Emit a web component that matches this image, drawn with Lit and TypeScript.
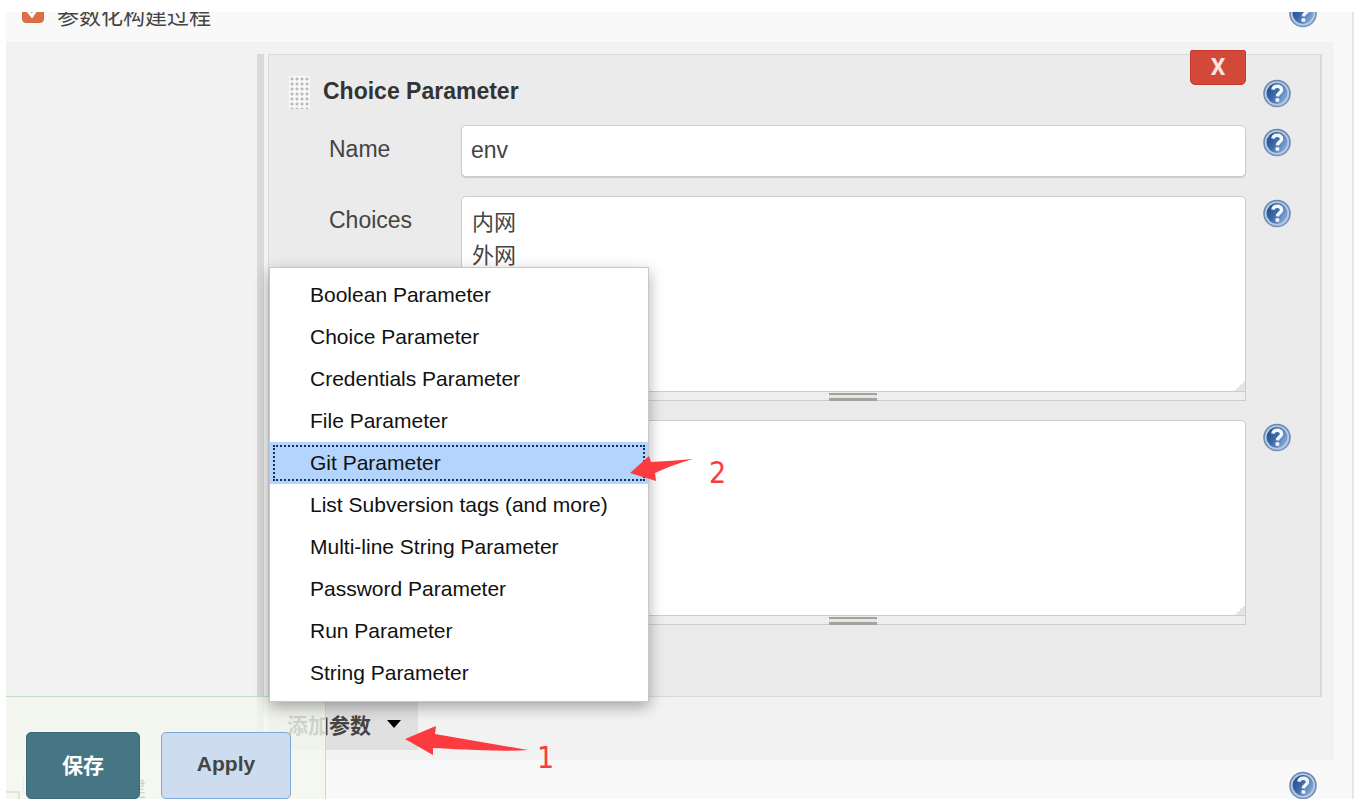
import { LitElement, html, css } from "lit";
import { customElement, property, state } from "lit/decorators.js";
import { classMap } from "lit/directives/class-map.js";

@customElement("help-button")
export class HelpButton extends LitElement {
  @property() topic = "";

  static styles = css`
    :host {
      display: block;
      width: 28px;
      height: 29px;
      flex: none;
    }
    .help {
      display: block;
      width: 28px;
      height: 29px;
      padding: 0;
      border: 0;
      background: none;
      cursor: pointer;
    }
    .icon {
      display: block;
    }
  `;

  render() {
    return html`<button class="help" type="button" aria-label="Help: ${this.topic}">
      <svg class="icon" width="28" height="29" viewBox="0 0 28 29" aria-hidden="true">
        <defs>
          <linearGradient id="disc" x1="0" y1="0.2" x2="1" y2="0.8">
            <stop offset="0" stop-color="#234c8c" />
            <stop offset="0.45" stop-color="#3f6cab" />
            <stop offset="1" stop-color="#8fb4dc" />
          </linearGradient>
          <linearGradient id="rim" x1="0" y1="0" x2="0" y2="1">
            <stop offset="0" stop-color="#6a85ad" />
            <stop offset="1" stop-color="#7691b8" />
          </linearGradient>
        </defs>
        <circle cx="14" cy="14.5" r="13.8" fill="url(#rim)" />
        <circle cx="14" cy="14.5" r="12.2" fill="#b4c9e4" />
        <circle cx="14" cy="14.5" r="10.4" fill="url(#disc)" />
        <path
          d="M9.8 10.6C10.2 8.2 11.9 7.2 14.2 7.2C17 7.2 18.6 8.8 18.6 11C18.6 14 14.6 13.9 14.4 17.4"
          fill="none"
          stroke="#f2f6fc"
          stroke-width="3.4"
        />
        <rect x="12.5" y="19.2" width="3.8" height="3.6" rx="0.8" fill="#f2f6fc" />
      </svg>
    </button>`;
  }
}

@customElement("app-root")
export class AppRoot extends LitElement {
  @state() private selected = "Git Parameter";

  private readonly types = [
    "Boolean Parameter",
    "Choice Parameter",
    "Credentials Parameter",
    "File Parameter",
    "Git Parameter",
    "List Subversion tags (and more)",
    "Multi-line String Parameter",
    "Password Parameter",
    "Run Parameter",
    "String Parameter",
  ];

  static styles = css`
    :host {
      display: block;
      box-sizing: border-box;
      padding: 12px 8px 9px 6px;
      background: #fff;
      color: #444;
      font-family: "Liberation Sans", "Noto Sans CJK SC", sans-serif;
      font-size: 23px;
    }
    * {
      box-sizing: border-box;
    }
    button,
    input,
    textarea {
      font-family: inherit;
    }
    .panel {
      position: relative;
      overflow: hidden;
      background: #f9f9f9;
      border-right: 2px solid #e6e6e6;
    }
    .option {
      display: flex;
      align-items: flex-start;
      padding: 0 35px 0 16px;
    }
    .option.first {
      height: 43px;
      margin-top: -13px;
    }
    .option.next {
      height: 39px;
      padding: 11px 35px 0 0;
      overflow: hidden;
    }
    .option-label {
      display: flex;
      align-items: flex-start;
      flex: 1;
      gap: 13px;
      font-size: 22px;
      line-height: 35px;
    }
    .tick {
      appearance: none;
      width: 22px;
      height: 22px;
      margin: 2px 0 0;
      border: 1px solid #c9c9c9;
      border-radius: 4px;
      background: #fff;
    }
    .tick:checked {
      border-color: #d0693f;
      background: #dc6f45
        url("data:image/svg+xml,%3Csvg xmlns='http://www.w3.org/2000/svg' viewBox='0 0 20 20'%3E%3Cpath d='M5 9l4 5 6-9' fill='none' stroke='white' stroke-width='3'/%3E%3C/svg%3E");
    }
    .edge {
      width: 14px;
      height: 8px;
      align-self: flex-end;
      margin-right: 3px;
      border: solid #999;
      border-width: 2px 2px 0 0;
    }
    .section {
      margin-right: 18px;
      padding: 12px 12px 10px 251px;
      background: #f2f2f2;
    }
    .repeat {
      border-left: 7px solid #d9d9d9;
      padding-left: 4px;
    }
    .card {
      border: 1px solid #d9d9d9;
      border-right-width: 2px;
      background: #ebebeb;
      padding-bottom: 71px;
    }
    .head {
      display: flex;
      align-items: flex-start;
      height: 70px;
      padding-left: 20px;
    }
    .grip {
      width: 21px;
      height: 33px;
      margin-top: 21px;
      background: radial-gradient(circle at 3px 3px, #bbb 1px, #f8f8f8 2px) 0 0 / 5px 5px;
    }
    .title {
      flex: 1;
      margin: 0;
      padding-left: 13px;
      font-size: 23px;
      line-height: 73px;
      font-weight: bold;
      color: #333;
    }
    .remove {
      width: 56px;
      height: 35px;
      margin-top: -5px;
      padding: 0;
      border: 1px solid #c6392f;
      border-radius: 2px 2px 5px 5px;
      background: #d24939;
      color: #f8e4e1;
      font-family: Roboto, sans-serif;
      font-size: 23px;
      font-weight: bold;
    }
    .side {
      width: 74px;
      padding: 3px 0 0 17px;
    }
    .head .side {
      padding-top: 24px;
    }
    .fields {
      display: grid;
      grid-template-columns: 192px minmax(0, 1fr) 74px;
      row-gap: 19px;
    }
    .name {
      padding-left: 60px;
      line-height: 48px;
    }
    .text,
    .area {
      display: block;
      width: 100%;
      margin: 0;
      border: 1px solid #ccc;
      background: #fff;
      color: #444;
      outline: 0;
    }
    .text {
      height: 52px;
      padding: 0 9px 2px;
      border-radius: 5px;
      box-shadow: 0 1px 1px #ccc;
      font-size: 23px;
    }
    .area {
      height: 196px;
      padding: 9px 10px;
      border-radius: 5px 5px 0 0;
      resize: none;
      font-size: 22px;
      line-height: 33px;
      background: linear-gradient(135deg, #fff 50%, #e4e4e4 50%) right bottom / 10px 10px no-repeat #fff;
    }
    .sizer {
      display: flex;
      justify-content: center;
      height: 9px;
      padding-top: 1px;
      border: solid #ccc;
      border-width: 0 1px 1px 0;
      background: #eee;
    }
    .sizer-handle {
      width: 48px;
      height: 8px;
      border-top: 2px solid #a3a39e;
      border-bottom: 3px solid #a3a39e;
      background: #e6e6e4;
    }
    .adder {
      position: relative;
      width: 150px;
    }
    .add {
      display: flex;
      align-items: center;
      gap: 16px;
      width: 150px;
      height: 53px;
      padding: 0 0 0 19px;
      border: 0;
      background: #e0e0e0;
      color: #444;
      font-size: 21px;
      font-weight: bold;
    }
    .caret {
      border: 7px solid transparent;
      border-top: 8px solid #000;
      border-bottom: 0;
    }
    .menu {
      position: absolute;
      z-index: 3;
      left: 1px;
      bottom: 48px;
      width: 380px;
      padding: 6px 0 7px;
      border: 1px solid #c8c8c8;
      background: #fff;
      box-shadow: 0 5px 14px rgba(0, 0, 0, 0.32);
    }
    .item {
      display: block;
      width: 100%;
      height: 42px;
      padding: 0 0 0 40px;
      border: 0;
      background: none;
      color: #111;
      font-size: 21px;
      text-align: left;
    }
    .item.active {
      background: #b3d4fd;
      outline: 2px dotted #14305c;
      outline-offset: -5px;
    }
    .note {
      position: absolute;
      z-index: 4;
      display: flex;
      color: #fb3b40;
      font-family: "DejaVu Sans Condensed", "DejaVu Sans", sans-serif;
      font-size: 30px;
      line-height: 30px;
      pointer-events: none;
    }
    .note.one {
      left: 137px;
      top: 29px;
      gap: 8px;
    }
    .note.one .digit {
      padding-top: 17px;
    }
    .note.two {
      left: 360px;
      top: 188px;
      gap: 15px;
    }
    .note.two .digit {
      padding-top: 2px;
    }
    .note svg {
      flex: none;
      fill: #fb3b40;
    }
    .actions {
      position: absolute;
      z-index: 2;
      left: 0;
      bottom: 0;
      display: flex;
      gap: 21px;
      padding: 35px 34px 0 20px;
      border: solid #c2dccd;
      border-width: 1px 1px 0 0;
      border-radius: 0 8px 0 0;
      background: rgba(244, 248, 238, 0.8);
    }
    .action {
      width: 130px;
      height: 67px;
      padding: 0 0 4px;
      border: 1px solid #7ba9d3;
      border-radius: 5px;
      background: #cddcee;
      color: #444;
      font-size: 21px;
      font-weight: bold;
    }
    .action.primary {
      width: 114px;
      border-color: #3b6b79;
      background: #467684;
      color: #fff;
    }
  `;

  private area(id: string, label: string, value: string) {
    return html`
      <label class="name" for=${id}>${label}</label>
      <div>
        <textarea class="area" id=${id} .value=${value}></textarea>
        <div class="sizer"><div class="sizer-handle"></div></div>
      </div>
      <div class="side"><help-button topic=${label}></help-button></div>
    `;
  }

  render() {
    return html`
      <main class="panel">
        <div class="option first">
          <label class="option-label"><input class="tick" type="checkbox" checked />参数化构建过程</label>
          <help-button topic="参数化构建过程"></help-button>
        </div>

        <section class="section">
          <div class="repeat">
            <div class="card">
              <div class="head">
                <div class="grip"></div>
                <h2 class="title">Choice Parameter</h2>
                <button class="remove" type="button">X</button>
                <div class="side"><help-button topic="Choice Parameter"></help-button></div>
              </div>
              <div class="fields">
                <label class="name" for="name">Name</label>
                <input class="text" id="name" type="text" .value=${"env"} />
                <div class="side"><help-button topic="Name"></help-button></div>
                ${this.area("choices", "Choices", "内网\n外网")}
                ${this.area("description", "描述", "")}
              </div>
            </div>
            <div class="adder">
              <button class="add" type="button" aria-haspopup="menu">添加参数<span class="caret"></span></button>
              <div class="menu" role="menu">
                ${this.types.map(
                  (type) => html`<button
                    class=${classMap({ item: true, active: type === this.selected })}
                    type="button"
                    role="menuitem"
                    @click=${() => (this.selected = type)}
                  >${type}</button>`
                )}
                <span class="note two">
                  <svg width="64" height="26" viewBox="0 0 64 26" aria-hidden="true">
                    <path d="M0 17L19 0L21 6Q42 5 63 3Q42 9 25 17L26 25Z" />
                  </svg><span class="digit">2</span>
                </span>
              </div>
              <span class="note one">
                <svg width="124" height="30" viewBox="0 0 124 30" aria-hidden="true">
                  <path d="M0 13L31 0L30 8L123 24Q100 26 28 22V29Z" />
                </svg><span class="digit">1</span>
              </span>
            </div>
          </div>
        </section>

        <div class="option next">
          <span class="edge"></span>
          <label class="option-label"><input class="tick" type="checkbox" />关闭构建</label>
          <help-button topic="关闭构建"></help-button>
        </div>

        <div class="actions">
          <button class="action primary" type="submit">保存</button>
          <button class="action" type="button">Apply</button>
        </div>
      </main>
    `;
  }
}
